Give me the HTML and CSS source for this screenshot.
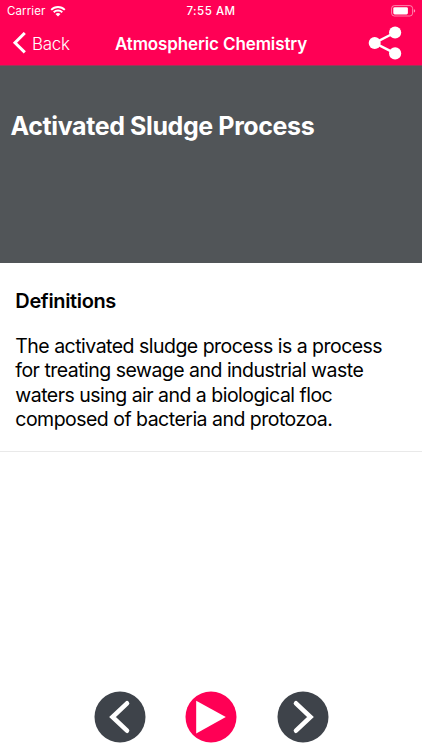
FILE: index.html
```html
<!DOCTYPE html>
<html lang="en">

<head>
    <title>Activated Sludge Process</title>
    <meta charset="UTF-8">
    <meta name="viewport" content="width=device-width, initial-scale=1.0">
    <link rel="stylesheet" href="styles.css">
</head>

<body>
    <header class="top-bar">
        <div class="status-bar">
            <div class="carrier">
                <span>Carrier</span>
                <svg class="wifi" viewBox="0 0 16 12">
                    <path d="M1.2 4.8a9.6 9.6 0 0 1 13.6 0" />
                    <path d="M3.7 7.3a6.2 6.2 0 0 1 8.6 0" />
                    <path class="dot" d="M5.5 9.1a3.6 3.6 0 0 1 5 0L8 11.6z" />
                </svg>
            </div>
            <span class="time">7:55 AM</span>
            <svg class="battery" viewBox="0 0 26 12">
                <rect class="shell" x="1.6" y="0.6" width="21" height="10.4" rx="2.8" />
                <rect x="3.3" y="2.2" width="14.6" height="7.3" rx="1.4" />
                <path d="M23.8 4.2q1.4.4 1.4 1.7t-1.4 1.7z" opacity=".6" />
            </svg>
        </div>
        <nav class="nav-bar">
            <a class="back">
                <svg viewBox="0 0 14 22">
                    <path d="M12.8 1L3 10.7l9.8 9.7" />
                </svg>
                <span>Back</span>
            </a>
            <span class="nav-title">Atmospheric Chemistry</span>
            <svg class="share" viewBox="0 0 34 34">
                <path d="M27.1 6.5L6.7 17l20.4 10.4" />
                <circle cx="27.1" cy="6.5" r="6.1" />
                <circle cx="6.7" cy="17" r="6" />
                <circle cx="27.1" cy="27.4" r="6.1" />
            </svg>
        </nav>
    </header>

    <section class="hero">
        <h1>Activated Sludge Process</h1>
    </section>

    <main class="definition">
        <h2>Definitions</h2>
        <p>
            The activated sludge process is a process<br>
            for treating sewage and industrial waste<br>
            waters using air and a biological floc<br>
            composed of bacteria and protozoa.
        </p>
    </main>

    <footer class="controls">
        <svg class="control" viewBox="0 0 52 52">
            <circle cx="26" cy="26" r="25.5" />
            <path class="arrow" d="M33 12.3L18.5 26 33 39.7" />
        </svg>
        <svg class="control play" viewBox="0 0 52 52">
            <circle cx="26" cy="26" r="25.5" />
            <path class="triangle" d="M11.2 9.8L40.8 26 11.2 42.4z" />
        </svg>
        <svg class="control" viewBox="0 0 52 52">
            <circle cx="26" cy="26" r="25.5" />
            <path class="arrow" d="M19 12.3L33.5 26 19 39.7" />
        </svg>
    </footer>
</body>

</html>
```
FILE: styles.css
```css
* {
    box-sizing: border-box;
}

body {
    margin: 0;
    height: 100vh;
    display: flex;
    flex-direction: column;
    background-color: #ffffff;
    color: #000000;
    font-family: Inter, "Liberation Sans", sans-serif;
    overflow: hidden;
}

svg {
    display: block;
    flex: none;
}

.top-bar {
    height: 66px;
    flex: none;
    background-color: #ff0055;
    border-bottom: 1px solid #9c3557;
    color: #ffffff;
}

.status-bar {
    height: 22px;
    display: grid;
    grid-template-columns: 1fr auto 1fr;
    align-items: center;
    padding: 0 7px;
    font-size: 11.5px;
}

.carrier {
    display: flex;
    align-items: center;
    gap: 5px;
    letter-spacing: 0.1px;
}

.wifi {
    width: 16px;
    height: 12px;
    margin-top: -1px;
    fill: none;
    stroke: #ffffff;
    stroke-width: 1.9;
}

.wifi .dot {
    fill: #ffffff;
    stroke: none;
}

.time {
    font-weight: 500;
    letter-spacing: 0.5px;
}

.battery {
    width: 26px;
    height: 12px;
    margin-right: -1px;
    margin-top: -1px;
    justify-self: end;
    fill: #ffffff;
}

.battery .shell {
    fill: none;
    stroke: #ffffff;
    stroke-opacity: 0.5;
}

.nav-bar {
    height: 43px;
    display: grid;
    grid-template-columns: 1fr auto 1fr;
    align-items: center;
    padding: 0 12px;
}

.back {
    display: flex;
    align-items: center;
    gap: 6px;
    font-size: 17px;
    font-weight: 300;
    letter-spacing: -0.3px;
}

.back svg {
    width: 14px;
    height: 22px;
    margin-top: -1px;
    fill: none;
    stroke: #ffffff;
    stroke-width: 3;
}

.nav-title {
    font-size: 17px;
    font-weight: 600;
    letter-spacing: -0.12px;
}

.share {
    width: 34px;
    height: 34px;
    margin-top: -2px;
    margin-right: 8px;
    justify-self: end;
    fill: #ffffff;
}

.share path {
    fill: none;
    stroke: #ffffff;
    stroke-width: 2.5;
}

.hero {
    height: 197px;
    flex: none;
    padding: 44px 10.6px 0;
    background-color: #515558;
    color: #ffffff;
}

h1 {
    margin: 0;
    font-size: 25px;
    line-height: 32px;
    font-weight: 700;
    letter-spacing: -0.4px;
    white-space: nowrap;
}

.definition {
    height: 189px;
    flex: none;
    padding: 26px 15.3px 0;
    border-bottom: 1px solid #e9e9e9;
}

h2 {
    margin: 0;
    font-size: 20px;
    line-height: 24px;
    font-weight: 600;
    letter-spacing: -0.35px;
}

p {
    margin: 21px 0 0;
    font-size: 19.5px;
    line-height: 24.3px;
    letter-spacing: -0.52px;
    white-space: nowrap;
}

.controls {
    margin-top: auto;
    display: flex;
    justify-content: center;
    gap: 39.5px;
    padding-bottom: 7.5px;
}

.control {
    width: 52px;
    height: 52px;
    fill: #3e434a;
}

.control.play {
    fill: #ff0055;
}

.control .arrow {
    fill: none;
    stroke: #ffffff;
    stroke-width: 4.6;
    stroke-linecap: round;
}

.control .triangle {
    fill: #ffffff;
}
```
